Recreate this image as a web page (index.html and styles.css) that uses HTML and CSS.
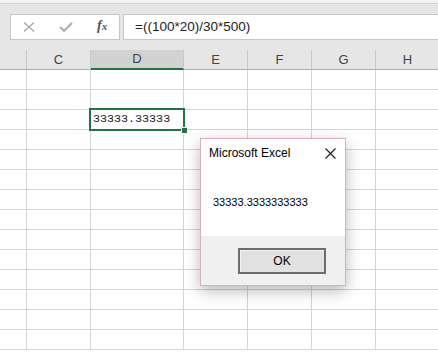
FILE: index.html
```html
<!DOCTYPE html>
<html lang="en">
<head>
<meta charset="UTF-8" />
<meta name="viewport" content="width=device-width, initial-scale=1" />
<title>Excel - formula result</title>
<link rel="stylesheet" href="styles.css">
</head>
<body>

<div class="toolbar">
  <div class="formula-bar">
    <div class="fx-box">
      <svg class="icon-cancel" width="12" height="10" viewBox="0 0 12 10"><path d="M1 0.5 L11 9.5 M11 0.5 L1 9.5" stroke="#a8a8a8" stroke-width="1.4" fill="none" /></svg>
      <svg class="icon-enter" width="14" height="10" viewBox="0 0 14 10"><path d="M1 5 L5 9 L13 1" stroke="#a8a8a8" stroke-width="1.8" fill="none" /></svg>
      <span class="fx">f<span>x</span></span>
    </div>
    <div class="formula-input">=((100*20)/30*500)</div>
  </div>
</div>

<div class="sheet">
  <div class="row header">
    <div></div><div>C</div><div class="selected">D</div><div>E</div><div>F</div><div>G</div><div>H</div>
  </div>
  <div class="row"><div></div><div></div><div></div><div></div><div></div><div></div><div></div></div>
  <div class="row"><div></div><div></div><div></div><div></div><div></div><div></div><div></div></div>
  <div class="row">
    <div></div><div></div>
    <div class="cell-active">33333.33333<span class="selection"><span class="handle"></span></span></div>
    <div></div><div></div><div></div><div></div>
  </div>
  <div class="row"><div></div><div></div><div></div><div></div><div></div><div></div><div></div></div>
  <div class="row"><div></div><div></div><div></div><div></div><div></div><div></div><div></div></div>
  <div class="row"><div></div><div></div><div></div><div></div><div></div><div></div><div></div></div>
  <div class="row"><div></div><div></div><div></div><div></div><div></div><div></div><div></div></div>
  <div class="row"><div></div><div></div><div></div><div></div><div></div><div></div><div></div></div>
  <div class="row"><div></div><div></div><div></div><div></div><div></div><div></div><div></div></div>
  <div class="row"><div></div><div></div><div></div><div></div><div></div><div></div><div></div></div>
  <div class="row"><div></div><div></div><div></div><div></div><div></div><div></div><div></div></div>
  <div class="row"><div></div><div></div><div></div><div></div><div></div><div></div><div></div></div>
  <div class="row"><div></div><div></div><div></div><div></div><div></div><div></div><div></div></div>
  <div class="row"><div></div><div></div><div></div><div></div><div></div><div></div><div></div></div>
</div>

<div class="dialog">
  <div class="dialog-title">
    <span>Microsoft Excel</span>
    <svg width="11" height="11" viewBox="0 0 11 11"><path d="M0.5 0.5 L10.5 10.5 M10.5 0.5 L0.5 10.5" stroke="#1a1a1a" stroke-width="1.1" fill="none" /></svg>
  </div>
  <div class="dialog-body">33333.3333333333</div>
  <div class="dialog-footer">
    <button class="ok-button">OK</button>
  </div>
</div>

</body>
</html>
```

FILE: styles.css
```css
body {
  margin: 0;
  width: 438px;
  height: 362px;
  overflow: hidden;
  position: relative;
  background: #fff;
  font-family: "Liberation Sans", Arial, sans-serif;
}
.toolbar {
  height: 50px;
  box-sizing: border-box;
  padding-top: 14px;
  background: #e6e6e6;
  box-shadow: inset 0 3px 0 #f3f3f3, inset 0 4px 0 #d4d4d4;
}
.formula-bar {
  display: flex;
  gap: 3px;
  padding-left: 10px;
}
.fx-box {
  width: 110px;
  height: 26px;
  box-sizing: border-box;
  border: 1px solid #c6c6c6;
  background: #fff;
  display: flex;
  align-items: center;
  gap: 24px;
  padding-left: 12px;
}
.fx {
  font-family: "Liberation Serif", serif;
  font-style: italic;
  font-weight: bold;
  font-size: 14px;
  color: #555;
  margin-top: -2px;
}
.fx span {
  font-size: 11px;
}
.formula-input {
  flex: 1;
  height: 26px;
  box-sizing: border-box;
  border: 1px solid #c6c6c6;
  border-right: none;
  background: #fff;
  padding-left: 11px;
  font-size: 13.5px;
  line-height: 24px;
  color: #222;
}
.row {
  display: grid;
  grid-template-columns: 27px 64px 93px 64px 64px 64px 64px;
  height: 20px;
}
.row > div {
  box-sizing: border-box;
  border-right: 1px solid #d4d4d4;
  border-bottom: 1px solid #d4d4d4;
}
.header > div {
  background: #e6e6e6;
  border-right-color: #c8c8c8;
  border-bottom-color: #ababab;
  text-align: center;
  font-size: 13px;
  line-height: 19px;
  color: #444;
}
.header > .selected {
  background: #d2d2d2;
  border-bottom: 2px solid #217346;
  line-height: 18px;
}
.cell-active {
  position: relative;
  padding-left: 2px;
  font-family: "Liberation Mono", monospace;
  font-size: 11.7px;
  line-height: 19px;
  color: #1a1a1a;
}
.selection {
  position: absolute;
  inset: -2px;
  border: 2px solid #217346;
}
.handle {
  position: absolute;
  right: -5px;
  bottom: -5px;
  width: 5px;
  height: 5px;
  background: #217346;
  border: 1px solid #fff;
}
.dialog {
  position: absolute;
  left: 200px;
  top: 138px;
  width: 146px;
  height: 148px;
  box-sizing: border-box;
  border: 1px solid #dbb1b6;
  background: #fff;
  box-shadow: 0 5px 14px rgba(0, 0, 0, 0.28);
  display: flex;
  flex-direction: column;
}
.dialog-title {
  display: flex;
  justify-content: space-between;
  align-items: flex-start;
  padding: 7px 9px 0 8px;
  font-size: 12px;
  line-height: 14px;
  color: #000;
}
.dialog-title svg {
  margin-top: 2px;
}
.dialog-body {
  flex: 1;
  padding: 36px 0 0 12px;
  font-size: 11px;
  line-height: 13px;
  color: #000;
}
.dialog-footer {
  height: 49px;
  box-sizing: border-box;
  background: #f0f0f0;
  display: flex;
  justify-content: flex-end;
  align-items: flex-start;
  padding: 12px 19px 0 0;
}
.ok-button {
  width: 88px;
  height: 26px;
  box-sizing: border-box;
  border: 2px solid #6d6d6d;
  background: #e1e1e1;
  box-shadow: inset 1px 1px 0 #f4f4f4;
  font-family: "Liberation Sans", Arial, sans-serif;
  font-size: 12px;
  color: #000;
  padding: 0;
}
```
